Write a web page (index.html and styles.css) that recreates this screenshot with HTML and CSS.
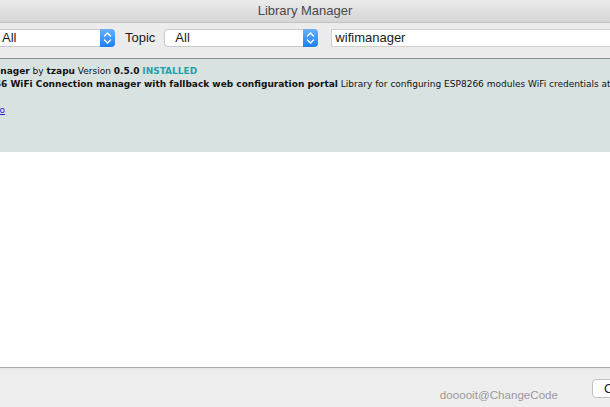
FILE: index.html
```html
<!DOCTYPE html>
<html lang="en">
<head>
    <meta charset="UTF-8">
    <title>Library Manager</title>
    <link rel="stylesheet" href="styles.css">
</head>
<body>
    <div class="window">
        <div class="titlebar">Library Manager</div>

        <div class="toolbar">
            <div class="popup typePopup">
                <span class="popupText">All</span>
                <span class="stepper">
                    <svg width="15" height="18" viewBox="0 0 15 18">
                        <path d="M4.5 7 L7.5 4 L10.5 7" fill="none" stroke="#fff" stroke-width="1.4" stroke-linecap="round" stroke-linejoin="round"/>
                        <path d="M4.5 11 L7.5 14 L10.5 11" fill="none" stroke="#fff" stroke-width="1.4" stroke-linecap="round" stroke-linejoin="round"/>
                    </svg>
                </span>
            </div>
            <div class="label">Topic</div>
            <div class="popup topicPopup">
                <span class="popupText">All</span>
                <span class="stepper">
                    <svg width="15" height="18" viewBox="0 0 15 18">
                        <path d="M4.5 7 L7.5 4 L10.5 7" fill="none" stroke="#fff" stroke-width="1.4" stroke-linecap="round" stroke-linejoin="round"/>
                        <path d="M4.5 11 L7.5 14 L10.5 11" fill="none" stroke="#fff" stroke-width="1.4" stroke-linecap="round" stroke-linejoin="round"/>
                    </svg>
                </span>
            </div>
            <div class="search">wifimanager</div>
        </div>

        <div class="list">
            <div class="item selected">
                <div class="itemText">
                    <div class="line"><b>WiFiManager</b> by <b>tzapu</b> Version <b>0.5.0</b> <b class="installed">INSTALLED</b></div>
                    <div class="line"><b>ESP8266 WiFi Connection manager with fallback web configuration portal</b> Library for configuring ESP8266 modules WiFi credentials at runtime.</div>
                    <div class="line">&nbsp;</div>
                    <div class="line"><a href="#">More info</a></div>
                </div>
            </div>
        </div>

        <div class="footer">
            <span class="mark">dooooit@ChangeCode</span>
            <div class="button">Close</div>
        </div>
    </div>
</body>
</html>
```

FILE: styles.css
```css
*{
    margin: 0;
    padding: 0;
    box-sizing: border-box;
}
html, body{
    width: 610px;
    height: 407px;
    overflow: hidden;
    background: #fff;
}
.window{
    width: 610px;
    height: 407px;
    display: flex;
    flex-direction: column;
    overflow: hidden;
    font-family: "Liberation Sans", Arial, sans-serif;
}
.titlebar{
    height: 23px;
    line-height: 22px;
    text-align: center;
    font-size: 13px;
    color: #4a4a4a;
    background: linear-gradient(#ebebeb, #d5d5d5);
    border-bottom: 1px solid #c4c4c4;
    flex-shrink: 0;
}
.toolbar{
    height: 36px;
    flex-shrink: 0;
    display: flex;
    align-items: flex-start;
    padding-top: 6px;
    background: #ececec;
    border-bottom: 1px solid #8c8c8c;
    font-size: 13px;
    color: #1a1a1a;
}
.popup{
    height: 18px;
    display: flex;
    background: #fff;
    border: 1px solid #c9c9c9;
    border-right: none;
    border-radius: 4px;
}
.popupText{
    flex: 1;
    line-height: 16px;
    padding-left: 10px;
}
.stepper{
    width: 15px;
    height: 18px;
    margin-top: -1px;
    border-radius: 0 4px 4px 0;
    background: linear-gradient(#69b1fa, #1b7ff5);
    display: flex;
}
.typePopup{
    width: 175px;
    margin-left: -60px;
}
.typePopup .popupText{
    padding-left: 61px;
}
.label{
    margin-left: 10px;
    line-height: 18px;
}
.topicPopup{
    width: 154px;
    margin-left: 9px;
}
.search{
    flex: 1;
    height: 18px;
    margin-left: 13px;
    margin-right: -20px;
    line-height: 16px;
    padding-left: 3px;
    background: #fff;
    border: 1px solid #cfcfcf;
}
.list{
    flex: 1;
    background: #fff;
}
.selected{
    height: 93px;
    background: #d8e3e1;
    padding-top: 6px;
}
.itemText{
    margin-left: -37px;
    font-family: "DejaVu Sans", Verdana, sans-serif;
    font-size: 9px;
    color: #111;
    white-space: nowrap;
}
.line{
    height: 13px;
    line-height: 13px;
}
.installed{
    color: #26a0a8;
}
.itemText a{
    color: #2424c8;
}
.footer{
    height: 40px;
    flex-shrink: 0;
    display: flex;
    align-items: center;
    justify-content: flex-end;
    background: #eeeeee;
    border-top: 1px solid #a9a9a9;
    box-shadow: inset 0 2px 0 #e6e6e6;
}
.mark{
    font-size: 11.6px;
    color: #9a9a9a;
    margin-top: 14px;
}
.button{
    width: 70px;
    height: 19px;
    margin-left: 34px;
    margin-right: -52px;
    margin-top: 2px;
    padding-left: 11px;
    line-height: 17px;
    font-size: 13px;
    color: #222;
    background: #fff;
    border: 1px solid #c2c2c2;
    border-radius: 4px;
}
```
